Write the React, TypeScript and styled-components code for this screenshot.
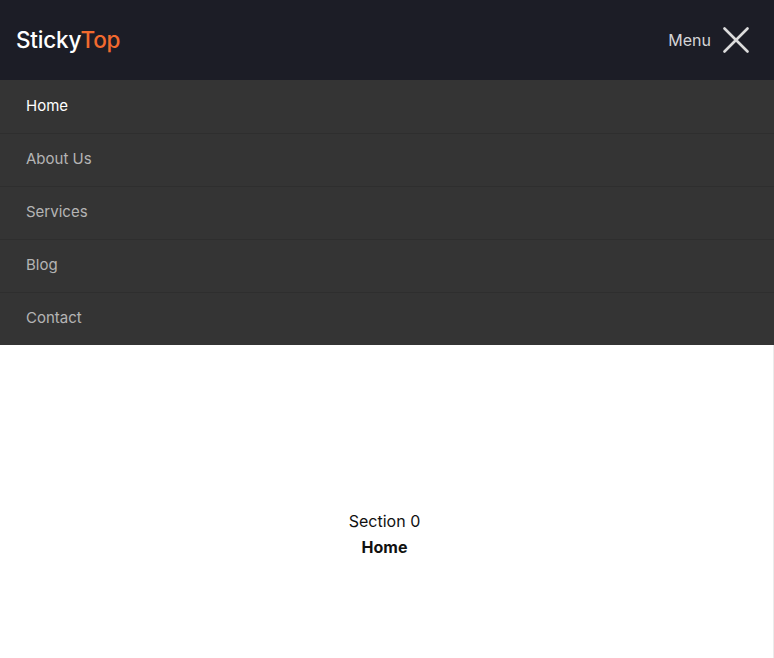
import React, { FC, useState } from 'react';
import styled, { createGlobalStyle } from 'styled-components';

const GlobalStyle = createGlobalStyle`
  html, body {
    margin: 0;
    padding: 0;
    background: #ffffff;
    font-family: Inter, 'Noto Sans', sans-serif;
  }
  * { box-sizing: border-box; }
`;

const Page = styled.div`
  display: flex;
  flex-direction: column;
  min-height: 100vh;
  border-right: 1px solid #ebebeb;
`;

const Header = styled.header`
  position: sticky;
  top: 0;
  z-index: 10;
  height: 80px;
  display: flex;
  align-items: center;
  justify-content: space-between;
  padding: 0 25px 0 16px;
  background: #1c1d26;
  margin-right: -1px;
`;

const Logo = styled.div`
  font-size: 22.5px;
  font-weight: 500;
  color: #ffffff;
  letter-spacing: -0.2px;
  margin-bottom: 1px;

  > span {
    color: #f26a2e;
  }
`;

const MenuToggle = styled.button`
  display: flex;
  align-items: center;
  gap: 12px;
  background: none;
  border: none;
  padding: 0;
  cursor: pointer;
  color: #d4d4d6;
  font-family: Inter, sans-serif;
  font-size: 16px;
`;

const Nav = styled.nav`
  display: flex;
  flex-direction: column;
  background: #343434;
  margin-right: -1px;
`;

const NavItem = styled.a<{ $active?: boolean }>`
  height: 53px;
  display: flex;
  align-items: center;
  padding: 0 26px 4px;
  font-size: 15px;
  color: ${ props => props.$active ? '#ffffff' : '#b4b4b4' };
  text-decoration: none;
  border-top: 1px solid ${ props => props.$active ? 'transparent' : '#2e2e2e' };
`;

const Section = styled.section`
  flex: 1;
  display: flex;
  flex-direction: column;
  align-items: center;
  padding: 163px 4px 0 0;
  color: #111111;
  font-size: 16px;
  line-height: 26px;

  > strong {
    font-weight: 700;
  }
`;

const links = ['Home', 'About Us', 'Services', 'Blog', 'Contact'];

const CloseIcon: FC = () => (
  <svg width="26" height="26" viewBox="0 0 26 26" fill="none">
    <path d="M1.5 1.5 L24.5 24.5 M24.5 1.5 L1.5 24.5" stroke="#dcdcdc" strokeWidth="2.6" strokeLinecap="round" />
  </svg>
);

const App: FC = () => {
  const [open, setOpen] = useState(true);
  const [active] = useState(0);

  return (
    <Page>
      <GlobalStyle />
      <Header>
        <Logo>Sticky<span>Top</span></Logo>
        <MenuToggle onClick={ () => setOpen(!open) }>
          Menu
          <CloseIcon />
        </MenuToggle>
      </Header>
      { open && (
        <Nav>
          { links.map((x, i) => (
            <NavItem key={ x } href="#" $active={ i === active }>{ x }</NavItem>
          ))}
        </Nav>
      )}
      <Section>
        <span>Section { active }</span>
        <strong>{ links[active] }</strong>
      </Section>
    </Page>
  );
};

export default App;
